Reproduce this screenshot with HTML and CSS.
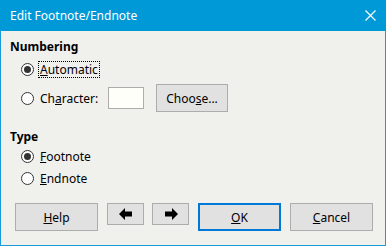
FILE: index.html
```html
<!DOCTYPE html>
<html lang="en">
<head>
    <meta charset="UTF-8">
    <title>Edit Footnote/Endnote</title>
    <link rel="stylesheet" href="styles.css">
</head>
<body>
    <div class="window">
        <div class="titlebar">
            <span class="title">Edit Footnote/Endnote</span>
            <svg class="close" width="11" height="11" viewBox="0 0 11 11">
                <path d="M0.5 0.5 L10.5 10.5 M10.5 0.5 L0.5 10.5" stroke="#fff" stroke-width="1.2"/>
            </svg>
        </div>
        <div class="content">
            <h2 class="heading heading-num">Numbering</h2>
            <div class="row">
                <span class="radio checked"></span>
                <span class="label focus"><u>A</u>utomatic</span>
            </div>
            <div class="row row-char">
                <span class="radio"></span>
                <span class="label label-char">Ch<u>a</u>racter:</span>
                <span class="input"></span>
                <button class="btn btn-choose">Choo<u>s</u>e...</button>
            </div>

            <h2 class="heading heading-type">Type</h2>
            <div class="row">
                <span class="radio checked"></span>
                <span class="label"><u>F</u>ootnote</span>
            </div>
            <div class="row">
                <span class="radio"></span>
                <span class="label"><u>E</u>ndnote</span>
            </div>

            <div class="buttons">
                <button class="btn btn-wide"><u>H</u>elp</button>
                <button class="btn btn-arrow">
                    <svg width="14" height="12" viewBox="0 0 14 12"><polygon points="0,6 6,0 6,3.5 13,3.5 13,8.5 6,8.5 6,12" fill="#000"/></svg>
                </button>
                <button class="btn btn-arrow">
                    <svg width="14" height="12" viewBox="0 0 14 12"><polygon points="14,6 8,0 8,3.5 1,3.5 1,8.5 8,8.5 8,12" fill="#000"/></svg>
                </button>
                <button class="btn btn-wide btn-default"><u>O</u>K</button>
                <button class="btn btn-wide"><u>C</u>ancel</button>
            </div>
        </div>
    </div>
</body>
</html>
```

FILE: styles.css
```css
*{
    margin: 0;
    padding: 0;
    box-sizing: border-box;
}
body{
    width: 386px;
    height: 246px;
    font-family: "Noto Sans", "Open Sans", sans-serif;
    font-size: 12px;
    color: #000;
}
.window{
    width: 386px;
    height: 246px;
    background: #f0f0ed;
    border: 1px solid #1a9ad6;
    border-top: none;
    display: flex;
    flex-direction: column;
}
.titlebar{
    height: 31px;
    background: #0099d7;
    display: flex;
    align-items: center;
    justify-content: space-between;
    margin: 0 -1px;
    padding: 0 10px 0 10px;
}
.title{
    color: #fff;
    font-size: 12px;
}
.content{
    display: flex;
    flex-direction: column;
    padding: 8px 0 0 0;
}
.heading{
    font-size: 12px;
    font-weight: bold;
    height: 16px;
    line-height: 16px;
    padding-left: 9px;
}
.heading-num{
    margin-bottom: 3px;
}
.heading-type{
    margin-top: 17px;
}
.row{
    display: flex;
    align-items: center;
    height: 22px;
    padding-left: 20px;
}
.row-char{
    height: 28px;
    margin-top: 4px;
}
.radio{
    width: 13px;
    height: 13px;
    border: 1px solid #333;
    border-radius: 50%;
    background: #fff;
    margin-right: 4px;
    display: flex;
    align-items: center;
    justify-content: center;
}
.radio.checked::after{
    content: "";
    width: 7px;
    height: 7px;
    border-radius: 50%;
    background: #333;
}
.label{
    line-height: 15px;
    padding: 0 1px;
    border: 1px solid transparent;
}
.label.focus{
    border: 1px dotted #000;
}
.label-char{
    width: 70px;
}
.input{
    width: 36px;
    height: 22px;
    border: 1px solid #adadad;
    background: #fffffa;
}
.btn{
    font-family: inherit;
    font-size: 12px;
    color: #000;
    background: #e1e1e1;
    border: 1px solid #adadad;
    height: 28px;
    display: flex;
    align-items: center;
    justify-content: center;
}
.btn-choose{
    width: 72px;
    margin-left: 12px;
}
.buttons{
    display: flex;
    align-items: flex-start;
    margin-top: 14px;
    padding-left: 14px;
}
.btn-wide{
    width: 83px;
}
.btn-arrow{
    width: 37px;
    height: 22px;
    margin-left: 9px;
}
.btn-arrow + .btn-arrow{
    margin-left: 8px;
}
.btn-default{
    border: 2px solid #0078d7;
    margin-left: 9px;
}
.btn-default + .btn-wide{
    margin-left: 9px;
}
```
